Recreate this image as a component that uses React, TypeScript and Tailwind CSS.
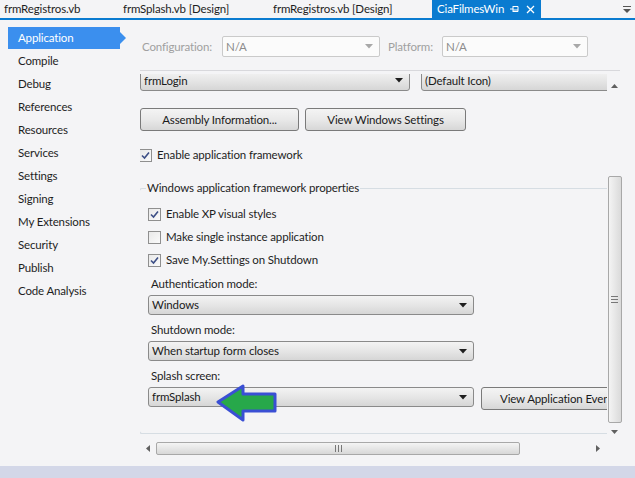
import React from "react";

function Arrow({ color = "#1e1e1e" }: { color?: string }) {
  return (
    <svg width="8" height="5" viewBox="0 0 8 5" className="shrink-0">
      <path d="M0 0 H8 L4 4.5 Z" fill={color} />
    </svg>
  );
}

function Combo({ text, className, disabled }: { text: string; className: string; disabled?: boolean }) {
  if (disabled) {
    return (
      <div className={`h-[21px] flex items-center justify-between border border-[#cacaca] rounded-[2px] bg-[#fbfbfb] pl-[3px] pr-[6px] text-[#8c8c8c] ${className}`}>
        <span>{text}</span>
        <Arrow color="#a8a8a8" />
      </div>
    );
  }
  return (
    <div className={`h-[20px] flex items-center justify-between border border-[#8a8a8a] rounded-[3px] bg-gradient-to-b from-[#f3f3f3] via-[#e6e6e6] to-[#d6d6d6] pl-[3px] pr-[6px] text-[#1a1a1a] shrink-0 ${className}`}>
      <span className="whitespace-nowrap">{text}</span>
      <Arrow />
    </div>
  );
}

function Button({ text, className }: { text: string; className: string }) {
  return (
    <div className={`h-[23px] flex items-center justify-center border border-[#7a7a7a] rounded-[3px] bg-gradient-to-b from-[#f4f4f4] via-[#e9e9e9] to-[#d7d7d7] text-[#1a1a1a] whitespace-nowrap shrink-0 ${className}`}>
      {text}
    </div>
  );
}

function Check({ checked, label }: { checked: boolean; label: string }) {
  return (
    <div className="h-[14px] flex items-center">
      <div className="w-[13px] h-[13px] border border-[#8f8f8f] bg-gradient-to-br from-[#e9e9e9] to-[#fafafa] flex items-center justify-center shrink-0">
        {checked && (
          <svg width="9" height="9" viewBox="0 0 9 9">
            <path d="M1 4.5 L3.5 7 L8 1.5" stroke="#3d4f86" strokeWidth="1.6" fill="none" />
          </svg>
        )}
      </div>
      <span className="ml-[5px] whitespace-nowrap">{label}</span>
    </div>
  );
}

const navItems = [
  "Application",
  "Compile",
  "Debug",
  "References",
  "Resources",
  "Services",
  "Settings",
  "Signing",
  "My Extensions",
  "Security",
  "Publish",
  "Code Analysis",
];

export default function App() {
  return (
    <div className="w-[635px] h-[478px] bg-[#f4f4f6] flex flex-col overflow-hidden text-[11.5px] tracking-[-0.15px] leading-[16px] text-[#1e1e1e] font-['Lato','Noto_Sans',sans-serif]">
      {/* Tab bar */}
      <div className="h-[18px] flex items-stretch shrink-0">
        <div className="w-[119px] pl-[4px] flex items-center whitespace-nowrap">frmRegistros.vb</div>
        <div className="w-[150px] pl-[4px] flex items-center whitespace-nowrap">frmSplash.vb [Design]</div>
        <div className="w-[163px] pl-[4px] flex items-center whitespace-nowrap">frmRegistros.vb [Design]</div>
        <div className="w-[109px] bg-[#0a7bd0] text-white pl-[5px] pr-[6px] flex items-center justify-between">
          <span className="whitespace-nowrap">CiaFilmesWin</span>
          <div className="flex items-center gap-[7px]">
            <svg width="9" height="8" viewBox="0 0 9 8">
              <path d="M0 4 H3 M3 1 V7 M3 1.5 H8 V6.5 H3 M3 5 H8" stroke="white" strokeWidth="1" fill="none" />
            </svg>
            <svg width="9" height="9" viewBox="0 0 9 9">
              <path d="M1 1 L8 8 M8 1 L1 8" stroke="white" strokeWidth="1.3" />
            </svg>
          </div>
        </div>
        <div className="flex-1 flex items-center justify-end pr-[4px]">
          <svg width="8" height="7" viewBox="0 0 8 7">
            <path d="M0 0.5 H8" stroke="#555" strokeWidth="1" />
            <path d="M0 3 H8 L4 7 Z" fill="#555" />
          </svg>
        </div>
      </div>
      <div className="h-[2px] bg-[#0a7bd0] shrink-0" />

      {/* Main */}
      <div className="flex-1 flex min-h-0">
        {/* Nav */}
        <div className="w-[140px] shrink-0 pt-[6px] pl-[8px] flex flex-col">
          {navItems.map((n, i) =>
            i === 0 ? (
              <div key={n} className="h-[23px] flex items-center">
                <div className="w-[112px] h-[22px] bg-[#3b8fee] text-white flex items-center pl-[10px]">{n}</div>
                <div className="w-0 h-0 border-y-[6px] border-y-transparent border-l-[6px] border-l-[#3b8fee]" />
              </div>
            ) : (
              <div key={n} className="h-[23px] flex items-center pl-[10px] whitespace-nowrap">
                {n}
              </div>
            )
          )}
        </div>

        {/* Content */}
        <div className="w-[482px] shrink-0 pt-[16px] flex flex-col">
          <div className="flex items-center h-[21px] pl-[2px]">
            <span className="w-[80px] text-[#a0a0a0]">Configuration:</span>
            <Combo text="N/A" className="w-[158px]" disabled />
            <span className="ml-[8px] w-[54px] text-[#a0a0a0]">Platform:</span>
            <Combo text="N/A" className="w-[146px]" disabled />
          </div>
          <div className="mt-[13px] h-px bg-[#d8d8dc] w-[480px]" />

          {/* Scroll area */}
          <div className="mt-[3px] h-[367px] flex">
            <div className="w-[467px] h-full overflow-hidden">
              <div className="-mt-[4px] flex flex-col">
                <div className="flex items-center">
                  <Combo text="frmLogin" className="w-[270px] h-[21px]" />
                  <Combo text="(Default Icon)" className="ml-[11px] w-[215px] h-[21px]" />
                </div>
                <div className="mt-[17px] flex gap-[6px]">
                  <Button text="Assembly Information..." className="w-[159px]" />
                  <Button text="View Windows Settings" className="w-[161px]" />
                </div>
                <div className="mt-[17px] -ml-px">
                  <Check checked label="Enable application framework" />
                </div>

                {/* Group */}
                <div className="mt-[18px] -ml-px w-[480px] flex flex-col">
                  <div className="h-[16px] flex items-center">
                    <div className="w-[7px] h-[8px] self-end border-l border-t border-[#d6dde3] rounded-tl-[3px]" />
                    <span className="px-[1px] whitespace-nowrap">Windows application framework properties</span>
                    <div className="flex-1 h-[8px] self-end border-t border-[#d6dde3]" />
                  </div>
                  <div className="border-l border-b border-[#d6dde3] rounded-bl-[3px] pl-[8px] pt-[11px] pb-[23px] flex flex-col">
                    <div className="flex flex-col gap-[9px]">
                      <Check checked label="Enable XP visual styles" />
                      <Check checked={false} label="Make single instance application" />
                      <Check checked label="Save My.Settings on Shutdown" />
                    </div>
                    <div className="mt-[9px] pl-[3px] h-[16px]">Authentication mode:</div>
                    <Combo text="Windows" className="mt-[3px] w-[326px]" />
                    <div className="mt-[7px] pl-[3px] h-[16px]">Shutdown mode:</div>
                    <Combo text="When startup form closes" className="mt-[3px] w-[326px]" />
                    <div className="mt-[7px] pl-[3px] h-[16px]">Splash screen:</div>
                    <div className="mt-[3px] flex items-start relative">
                      <Combo text="frmSplash" className="w-[326px]" />
                      <Button text="View Application Events..." className="ml-[7px] w-[150px] h-[22px] justify-start pl-[18px]" />
                      <svg width="66" height="44" viewBox="0 0 66 44" className="absolute left-[66px] -top-[5px]">
                        <polygon
                          points="4,20 29,4 29,12 61,12 61,29 29,29 29,38"
                          fill="#27a84a"
                          stroke="#3a4fd4"
                          strokeWidth="3"
                          strokeLinejoin="round"
                        />
                      </svg>
                    </div>
                  </div>
                </div>
              </div>
            </div>
            {/* Vertical scrollbar */}
            <div className="w-[15px] h-full flex flex-col items-center">
              <div className="h-[10px] shrink-0" />
              <svg width="7" height="4" viewBox="0 0 7 4" className="shrink-0">
                <path d="M0 4 L3.5 0 L7 4 Z" fill="#606060" />
              </svg>
              <div className="h-[88px] shrink-0" />
              <div className="w-[14px] h-[247px] shrink-0 border border-[#a8a8a8] rounded-[2px] bg-gradient-to-r from-[#f4f4f4] to-[#dadada] flex items-center justify-center">
                <svg width="7" height="7" viewBox="0 0 7 7">
                  <path d="M0 0.5 H7 M0 3.5 H7 M0 6.5 H7" stroke="#777" strokeWidth="1" />
                </svg>
              </div>
              <svg width="7" height="4" viewBox="0 0 7 4" className="mt-[7px] shrink-0">
                <path d="M0 0 L3.5 4 L7 0 Z" fill="#606060" />
              </svg>
            </div>
          </div>
          {/* Horizontal scrollbar */}
          <div className="h-[14px] w-[467px] flex items-center">
            <svg width="4" height="7" viewBox="0 0 4 7" className="ml-[6px]">
              <path d="M4 0 L0 3.5 L4 7 Z" fill="#606060" />
            </svg>
            <div className="ml-[6px] w-[364px] h-[13px] border border-[#a8a8a8] rounded-[2px] bg-gradient-to-b from-[#f4f4f4] to-[#d8d8d8] flex items-center justify-center">
              <svg width="7" height="7" viewBox="0 0 7 7">
                <path d="M0.5 0 V7 M3.5 0 V7 M6.5 0 V7" stroke="#777" strokeWidth="1" />
              </svg>
            </div>
            <div className="flex-1" />
            <svg width="4" height="7" viewBox="0 0 4 7" className="mr-[7px]">
              <path d="M0 0 L4 3.5 L0 7 Z" fill="#606060" />
            </svg>
          </div>
        </div>
      </div>

      {/* Bottom band */}
      <div className="h-[12px] bg-[#d3d7e8] shrink-0" />
    </div>
  );
}
